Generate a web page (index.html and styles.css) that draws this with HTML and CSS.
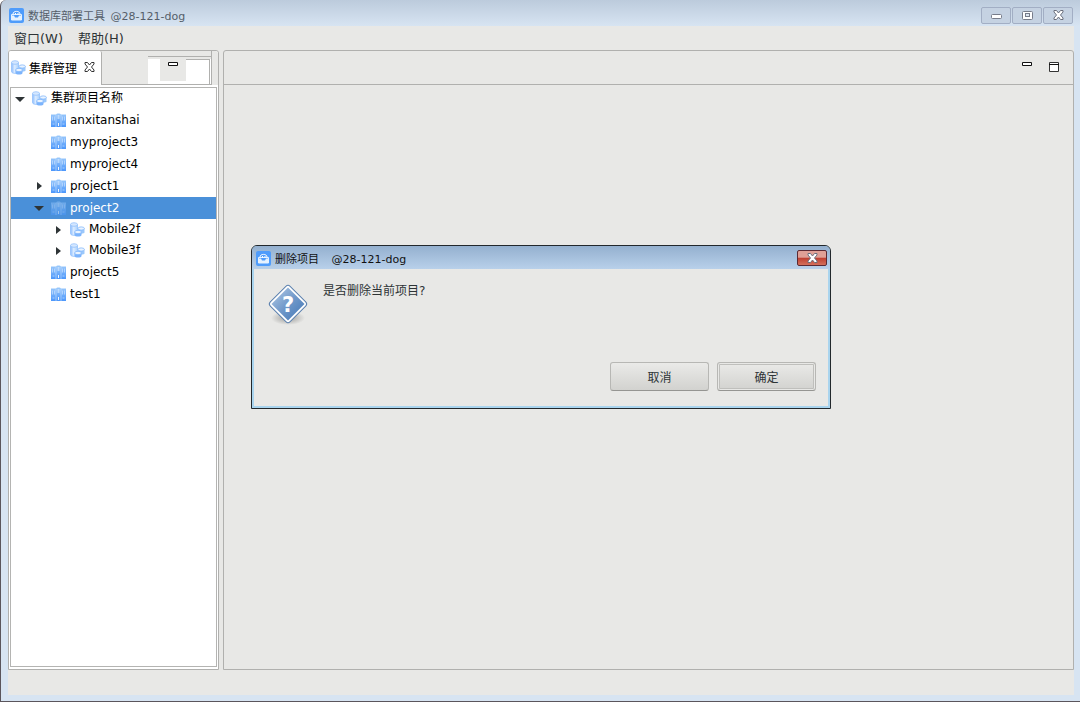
FILE: index.html
```
<!DOCTYPE html>
<html lang="zh-CN">
  <head>
    <meta charset="UTF-8" />
    <meta name="viewport" content="width=device-width, initial-scale=1.0" />
    <title>数据库部署工具</title>
    <link rel="stylesheet" href="styles.css">
  </head>
  <body>
    <!-- shared icons -->
    <svg class="defs" aria-hidden="true">
      <linearGradient id="blueFade" x1="0" y1="0" x2="0" y2="1">
        <stop offset="0" stop-color="#9bc9fb" />
        <stop offset="1" stop-color="#4c97fb" />
      </linearGradient>
      <linearGradient id="cylFade" x1="0" y1="0" x2="1" y2="0">
        <stop offset="0" stop-color="#8bbcff" />
        <stop offset="0.45" stop-color="#dcecff" />
        <stop offset="1" stop-color="#a9d0fc" />
      </linearGradient>
      <linearGradient id="diamondFade" x1="0" y1="0" x2="1" y2="1">
        <stop offset="0" stop-color="#b4cce6" />
        <stop offset="0.5" stop-color="#7199ca" />
        <stop offset="1" stop-color="#4075b5" />
      </linearGradient>
      <radialGradient id="shadowFade">
        <stop offset="0" stop-color="#9b9b99" />
        <stop offset="1" stop-color="#e8e8e6" />
      </radialGradient>
      <symbol id="app" viewBox="0 0 15 15">
        <rect width="15" height="15" rx="2" fill="#4f9cfb" />
        <path d="M4 6C4 2.500 11 2.500 11 6" fill="none" stroke="#fff" />
        <path d="M2.500 6.500h10v5.500h-10z" fill="none" stroke="#e6f2ff" />
        <path d="M3 7.500l2 0 1 2h3l1-2h2V12H3z" fill="#e6f2ff" />
        <path d="M6 5h1v1.500H6zM8.500 5h1v1.500h-1z" fill="#fff" />
      </symbol>
      <symbol id="cluster" viewBox="0 0 15 15">
        <path d="M.5 2.500v9c0 2.500 7 2.500 7 0v-9" fill="url(#cylFade)" stroke="#8dbdfb" stroke-width=".7" />
        <ellipse cx="4" cy="2.500" rx="3.500" ry="1.800" fill="#d4e7ff" stroke="#8dbdfb" stroke-width=".7" />
        <path d="M8 6.500v4c0 1.500 6.500 1.500 6.500 0v-4" fill="#9bc8fb" />
        <ellipse cx="11.200" cy="6.500" rx="3.200" ry="1.600" fill="#eaf4ff" stroke="#83b7fb" stroke-width=".8" />
        <path d="M4.500 10v3c0 2 7 2 7 0v-3" fill="#7cb4fc" />
        <ellipse cx="8" cy="10" rx="3.400" ry="1.700" fill="#eaf4ff" stroke="#7cb4fc" stroke-width=".8" />
      </symbol>
      <symbol id="project" viewBox="0 0 15 15">
        <path d="M0 1.500h5v12.500H0zM10 1.500h5v12.500h-5zM5 2Q5 .5 6.500.5h2Q10 .5 10 2v12H5z" fill="url(#blueFade)" />
        <path d="M1.500 3.500v4M3.500 3.500v4M11.500 3.500v4M13.500 3.500v4" stroke="#c9e1ff" stroke-width=".7" />
        <path d="M6.500 3h2M6.500 5h2M7.500 10v3" stroke="#eef6ff" />
        <path d="M1.500 11h2M11.500 11h2" stroke="#a9cffd" />
        <path d="M5 2v12M10 2v12" stroke="#cfe4ff" stroke-width=".6" />
      </symbol>
      <symbol id="cross" viewBox="0 0 11 10">
        <path d="M1 .5h2.500l2 2.500 2-2.500H10V2L7.500 5 10 8v1.500H7.500l-2-2.500-2 2.500H1V8l2.500-3L1 2z" />
      </symbol>
      <symbol id="bar" viewBox="0 0 10 4">
        <path d="M.5.5h9v3h-9z" fill="#fff" stroke="#111" />
      </symbol>
      <symbol id="open" viewBox="0 0 10 10"><path d="M0 3h10L5 8z" /></symbol>
      <symbol id="closed" viewBox="0 0 10 10"><path d="M3 1v8l5-4z" /></symbol>
    </svg>

    <div class="window">
      <header class="titlebar">
        <svg class="icon"><use href="#app" /></svg>
        <h1>数据库部署工具 <span>@28-121-dog</span></h1>
        <div class="window-buttons">
          <button aria-label="最小化">
            <svg width="11" height="9"><rect x=".5" y="3.500" width="10" height="4" rx="1" fill="#fff" stroke="#777c8a" /></svg>
          </button>
          <button aria-label="最大化">
            <svg width="11" height="9"><rect x=".5" y=".5" width="10" height="8" rx="1" fill="#fff" stroke="#777c8a" /><rect x="3.500" y="2.500" width="4" height="3" fill="#dce6f1" stroke="#777c8a" /></svg>
          </button>
          <button aria-label="关闭">
            <svg class="cross" width="11" height="10"><use href="#cross" /></svg>
          </button>
        </div>
      </header>
      <nav class="menubar">
        <button>窗口(W)</button>
        <button>帮助(H)</button>
      </nav>

      <main class="workbench">
        <section class="view">
          <div class="tabs">
            <button class="tab">
              <svg class="icon"><use href="#cluster" /></svg>
              <span>集群管理</span>
              <svg class="cross tab-close" width="11" height="10"><use href="#cross" /></svg>
            </button>
            <div class="view-tools">
              <div class="tool-slot">
                <button class="tool" aria-label="最小化视图"><svg width="10" height="4"><use href="#bar" /></svg></button>
                <div class="tool-rest"></div>
              </div>
            </div>
          </div>
          <ul class="tree">
            <li>
              <div class="row">
                <button class="arrow" aria-label="折叠"><svg><use href="#open" /></svg></button>
                <svg class="icon"><use href="#cluster" /></svg><span>集群项目名称</span>
              </div>
              <ul>
                <li><div class="row project"><svg class="icon"><use href="#project" /></svg><span>anxitanshai</span></div></li>
                <li><div class="row project"><svg class="icon"><use href="#project" /></svg><span>myproject3</span></div></li>
                <li><div class="row project"><svg class="icon"><use href="#project" /></svg><span>myproject4</span></div></li>
                <li>
                  <div class="row project">
                    <button class="arrow" aria-label="展开"><svg><use href="#closed" /></svg></button>
                    <svg class="icon"><use href="#project" /></svg><span>project1</span>
                  </div>
                </li>
                <li>
                  <div class="row project selected">
                    <button class="arrow" aria-label="折叠"><svg><use href="#open" /></svg></button>
                    <svg class="icon"><use href="#project" /></svg><span>project2</span>
                  </div>
                  <ul>
                    <li>
                      <div class="row sub">
                        <button class="arrow" aria-label="展开"><svg><use href="#closed" /></svg></button>
                        <svg class="icon"><use href="#cluster" /></svg><span>Mobile2f</span>
                      </div>
                    </li>
                    <li>
                      <div class="row sub">
                        <button class="arrow" aria-label="展开"><svg><use href="#closed" /></svg></button>
                        <svg class="icon"><use href="#cluster" /></svg><span>Mobile3f</span>
                      </div>
                    </li>
                  </ul>
                </li>
                <li><div class="row project"><svg class="icon"><use href="#project" /></svg><span>project5</span></div></li>
                <li><div class="row project"><svg class="icon"><use href="#project" /></svg><span>test1</span></div></li>
              </ul>
            </li>
          </ul>
        </section>

        <section class="editor">
          <div class="editor-tools">
            <button class="tool" aria-label="最小化"><svg width="10" height="4"><use href="#bar" /></svg></button>
            <button class="tool" aria-label="最大化">
              <svg width="10" height="10"><path d="M.5.5h9v9h-9z" fill="#fff" stroke="#333" /><path d="M0 2.500h10" stroke="#111" /></svg>
            </button>
          </div>
        </section>
      </main>
      <footer class="status"></footer>
    </div>

    <div class="dialog" role="dialog" aria-labelledby="dialogTitle">
      <header class="dialog-title">
        <svg class="icon"><use href="#app" /></svg>
        <h2 id="dialogTitle">删除项目 <span>@28-121-dog</span></h2>
        <button class="dialog-close" aria-label="关闭">
          <svg class="cross" width="11" height="10"><use href="#cross" /></svg>
        </button>
      </header>
      <div class="dialog-body">
        <div class="message">
          <svg width="42" height="44" viewBox="0 0 42 44" aria-hidden="true">
            <ellipse cx="21" cy="36" rx="17" ry="7" fill="url(#shadowFade)" />
            <rect x="7" y="8" width="28" height="28" rx="3" transform="rotate(45 21 22)" fill="#fff" stroke="#5b80ae" />
            <path d="M21 5.500L37.500 22 21 38.500 4.500 22z" fill="url(#diamondFade)" />
            <text class="mark" x="21" y="30" text-anchor="middle">?</text>
          </svg>
          <p>是否删除当前项目?</p>
        </div>
        <div class="actions">
          <button>取消</button>
          <button class="default">确定</button>
        </div>
      </div>
    </div>
  </body>
</html>
```

FILE: styles.css
```
* {
  box-sizing: border-box;
}
body {
  margin: 0;
  font-family: 'DejaVu Sans', 'Noto Sans CJK SC', sans-serif;
  font-size: 12px;
  color: #2e3436;
}
button {
  padding: 0;
  border: none;
  background: none;
  font: inherit;
  color: inherit;
}
h1,
h2,
p,
ul {
  margin: 0;
  padding: 0;
  font-size: 12px;
  font-weight: normal;
}
ul {
  list-style: none;
}
svg {
  flex: none;
}
.defs {
  position: absolute;
  width: 0;
  height: 0;
}
.icon {
  width: 15px;
  height: 15px;
}
.cross {
  fill: #fff;
  stroke: #6b6f7c;
}

/* main window */
.window {
  display: flex;
  flex-direction: column;
  min-height: 100vh;
  padding: 0 6px 6px 7px;
  border-left: 1px solid #5a555c;
  border-bottom: 1px solid #5a555c;
  border-top-left-radius: 6px;
  background: linear-gradient(#bccbdc, #d7e4f2 26px);
}
.titlebar {
  display: flex;
  align-items: center;
  height: 26px;
  padding: 4px 1px 0;
}
.titlebar h1 {
  flex: 1;
  margin-left: 4px;
  font-size: 11px;
  color: #555e69;
}
.titlebar span {
  margin-left: 2px;
}
.window-buttons {
  display: flex;
  gap: 1px;
}
.window-buttons button {
  display: flex;
  align-items: center;
  justify-content: center;
  width: 30px;
  height: 17px;
  border: 1px solid #a2aec4;
  border-radius: 2px;
  background: #c5d2e2;
}
.menubar {
  display: flex;
  gap: 15px;
  height: 24px;
  padding: 0 6px 2px;
  background: #e8e8e6;
  font-size: 13px;
}
.workbench {
  flex: 1;
  display: flex;
  gap: 4px;
  background: #e8e8e6;
}
.status {
  height: 25px;
  background: #e8e8e6;
}

/* left view */
.view {
  display: flex;
  flex-direction: column;
  width: 211px;
  border: 1px solid #b0b0ae;
  border-radius: 3px 3px 0 0;
  background: #fff;
}
.tabs {
  display: flex;
  height: 34px;
  background: #e8e8e6;
  border-radius: 3px 3px 0 0;
}
.tab {
  display: flex;
  align-items: center;
  width: 93px;
  padding: 0 0 2px 2px;
  border-right: 1px solid #b0b0ae;
  border-radius: 2px 2px 0 0;
  background: #fff;
  color: #000;
}
.tab span {
  margin: 0 7px 0 3px;
}
.tab-close {
  stroke: #333;
}
.view-tools {
  display: flex;
  flex: 1;
  justify-content: flex-end;
  margin-right: 6px;
  padding-top: 5px;
  border-right: 1px solid #b0b0ae;
  border-bottom: 1px solid #b0b0ae;
}
.tool-slot {
  display: flex;
  width: 63px;
  padding-left: 12px;
  border-top: 1px solid #b0b0ae;
  background: linear-gradient(#e8e8e6 2px, #fff 2px);
}
.tool {
  display: flex;
}
.tool-slot .tool {
  justify-content: center;
  width: 26px;
  height: 24px;
  padding-top: 5px;
  background: #e8e8e6;
}
.tool-rest {
  flex: 1;
  margin: 2px 1px 0 0;
  border-top: 1px solid #b0b0ae;
  border-right: 1px solid #b0b0ae;
}
.tree {
  flex: 1;
  margin: 2px 1px 2px;
  border: 1px solid #b4b4b2;
  color: #000;
}
.row {
  display: flex;
  align-items: center;
  height: 21px;
  padding-left: 21px;
  line-height: 21px;
}
.row .icon {
  margin-right: 4px;
}
.project {
  height: 22px;
  padding-left: 40px;
}
.sub {
  padding-left: 59px;
}
.arrow {
  width: 10px;
  height: 10px;
  margin-left: -17px;
  margin-right: 7px;
}
.arrow svg {
  display: block;
  width: 10px;
  height: 10px;
  fill: #2e3436;
}
.selected {
  background: #4a90d9;
  color: #fff;
}
.selected .icon {
  opacity: 0.5;
}

/* editor area */
.editor {
  flex: 1;
  border: 1px solid #b0b0ae;
  border-radius: 3px 3px 0 0;
}
.editor-tools {
  display: flex;
  justify-content: flex-end;
  gap: 17px;
  height: 34px;
  padding: 11px 14px 0;
  border-bottom: 1px solid #b0b0ae;
}

/* confirm dialog over the window */
.dialog {
  position: absolute;
  top: 245px;
  left: 251px;
  width: 580px;
  padding: 0 2px 2px;
  border: 1px solid #22282c;
  border-radius: 6px 6px 0 0;
  background: #a9d4ee;
}
.dialog-title {
  display: flex;
  align-items: center;
  height: 23px;
  margin: 0 -2px;
  padding: 1px 3px 0 4px;
  border-radius: 5px 5px 0 0;
  background: linear-gradient(#94b0cf, #b8d0ea);
  color: #111;
}
.dialog-title h2 {
  flex: 1;
  margin-left: 4px;
  font-size: 11px;
}
.dialog-title span {
  margin-left: 9px;
}
.dialog-close {
  display: flex;
  align-items: center;
  justify-content: center;
  width: 30px;
  height: 16px;
  border: 1px solid #5c2a33;
  border-radius: 2px;
  background: linear-gradient(#e0a096 45%, #bf3f30 50%, #d4705c);
}
.dialog-body {
  padding: 13px 12px 15px 13px;
  background: #e8e8e6;
}
.message {
  display: flex;
  align-items: flex-start;
  gap: 14px;
}
.message p {
  line-height: 18px;
}
.mark {
  fill: #fff;
  font-size: 21px;
  font-weight: bold;
}
.actions {
  display: flex;
  justify-content: flex-end;
  gap: 8px;
  margin-top: 36px;
}
.actions button {
  width: 99px;
  height: 29px;
  border: 1px solid #b7b7b4;
  border-bottom-color: #959592;
  border-radius: 3px;
  background: linear-gradient(#eaeae8, #d2d2cf);
}
.actions .default {
  box-shadow: inset 0 0 0 1px #e8e8e6, inset 0 0 0 2px #bfbfbc;
}
```
